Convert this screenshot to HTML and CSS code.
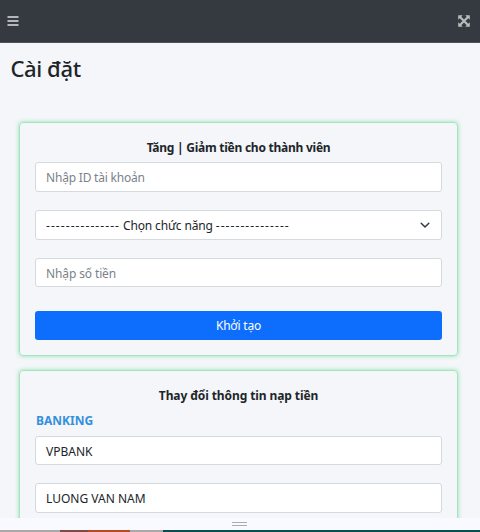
FILE: index.html
```html
<!DOCTYPE html>
<html lang="vi">
<head>
<meta charset="utf-8">
<title>Cài đặt</title>
<link rel="stylesheet" href="styles.css">
</head>
<body>
<div class="viewport">
  <header class="navbar">
    <svg class="icon" width="12" height="12" viewBox="0 0 12 12"><path d="M.5 2h11M.5 6h11M.5 10h11" stroke="#b4b6b9" stroke-width="2"/></svg>
    <svg class="icon" width="12" height="12" viewBox="0 0 12 12"><path d="M2 2l8 8M10 2L2 10" stroke="#b9bbbd" stroke-width="2.2"/><path d="M.2.2h4.6L.2 4.8zM11.8.2v4.6L7.2.2zM.2 11.8V7.2l4.6 4.6zM11.8 11.8H7.2l4.6-4.6z" fill="#b9bbbd"/></svg>
  </header>
  <main class="content">
    <h1 class="page-title"><span class="t-page">Cài đặt</span></h1>
    <section class="card">
      <h2 class="card-title"><span class="t-money">Tăng | Giảm tiền cho thành viên</span></h2>
      <div class="control placeholder"><span class="t-id">Nhập ID tài khoản</span></div>
      <div class="control select"><span class="t-select"><span class="dashes">---------------</span> Chọn chức năng <span class="dashes">---------------</span></span>
        <svg class="chevron" width="10" height="7" viewBox="0 0 10 7"><path d="M1.2 1.3L5 5l3.8-3.7" fill="none" stroke="#343a40" stroke-width="1.5" stroke-linecap="round" stroke-linejoin="round"/></svg>
      </div>
      <div class="control placeholder"><span class="t-amount">Nhập số tiền</span></div>
      <div class="button"><span class="t-create">Khởi tạo</span></div>
    </section>
    <section class="card">
      <h2 class="card-title"><span class="t-deposit">Thay đổi thông tin nạp tiền</span></h2>
      <h3 class="label">BANKING</h3>
      <div class="control">VPBANK</div>
      <div class="control">LUONG VAN NAM</div>
    </section>
  </main>
</div>
<div class="handle"><span class="grip"></span></div>
<div class="strip"></div>
</body>
</html>
```
FILE: styles.css
```css
* { box-sizing: border-box; }
body {
  margin: 0;
  height: 532px;
  overflow: hidden;
  display: flex;
  flex-direction: column;
  font: 12px/18px "Noto Sans", "Open Sans", sans-serif;
  color: #212529;
  background: #f4f6f9;
}
.viewport { height: 518px; flex: none; overflow: hidden; }
.navbar {
  height: 43px;
  display: flex;
  align-items: center;
  justify-content: space-between;
  padding: 0 10px 1px 7px;
  background: #343a40;
  border-bottom: 1px solid #4b545c;
}
.icon { display: block; }
.page-title { margin: 0; padding: 10px 10.5px 0; height: 79px; font-size: 22px; line-height: 30px; font-weight: 500; }
.t-page { letter-spacing: -.4px; }
.t-money { letter-spacing: -.25px; }
.t-deposit { letter-spacing: -.1px; }
.t-id { letter-spacing: -.2px; }
.t-amount { letter-spacing: -.12px; }
.t-create { letter-spacing: -.2px; }
.t-select { letter-spacing: -.15px; }
.dashes { letter-spacing: 1.07px; }
.card {
  margin: 0 22px 14px 19px;
  height: 234px;
  padding: 16px 15px 0;
  border: 1px solid #a4e5bf;
  border-radius: 4px;
  box-shadow: 0 0 4px #8ee0ae;
}
.card-title { margin: 0 0 5.4px; font-size: 12px; line-height: 18px; font-weight: 700; text-align: center; }
.label { margin: 0 0 5.4px; padding: 1px 0 0 1px; font-size: 12px; line-height: 19px; font-weight: 700; color: #3490dc; }
.control {
  height: 29.6px;
  margin-bottom: 18.1px;
  padding: 2px 9px 0 10px;
  display: flex;
  align-items: center;
  justify-content: space-between;
  background: #fff;
  border: 1px solid #d5dade;
  border-radius: 3px;
}
.placeholder { color: #7b8289; }
.chevron { margin-right: 2px; }
.button {
  height: 29.6px;
  margin-top: 23.3px;
  padding-top: 2px;
  display: flex;
  align-items: center;
  justify-content: center;
  color: #fff;
  background: #0d6efd;
  border-radius: 3px;
}
.handle { height: 12px; flex: none; display: flex; align-items: center; justify-content: center; background: #f8faff; }
.grip { width: 15px; height: 4px; margin-right: 2px; border: solid #a9abae; border-width: 1px 0; }
.strip {
  height: 2px;
  flex: none;
  background: linear-gradient(90deg, #aaa9a5 0 60px, #7c4c46 60px 88px, #b54a27 88px 130px, #aaa9a5 130px 163px, #0a4b55 163px);
}
```
